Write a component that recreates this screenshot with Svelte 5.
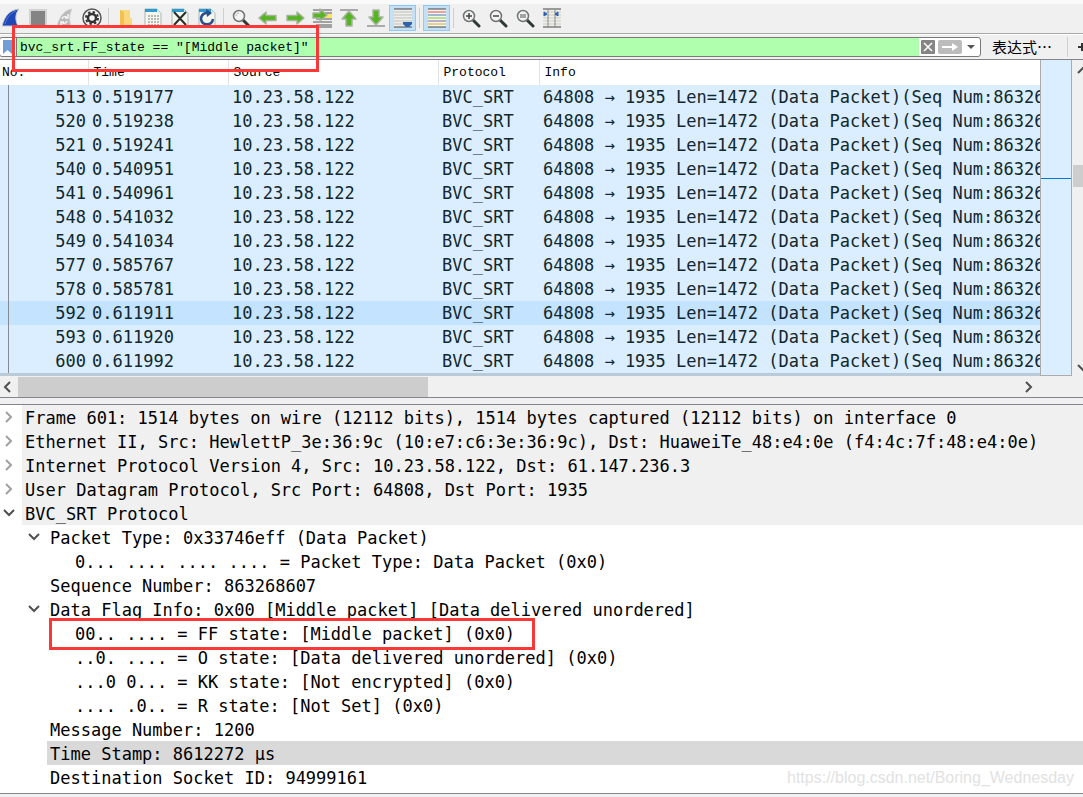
<script>
  const tools = [
    'fin', 'stop', 'restart', 'options', '|',
    'open', 'save', 'close', 'reload', '|',
    'find', 'back', 'forward', 'goto', 'first', 'last', 'autoscroll', '|',
    'colorize', '|',
    'zoom in', 'zoom out', 'zoom reset', 'columns'
  ]
  const ARROW = 'M1 10 L8 4 V7.5 H18 V12.5 H8 V16 Z'

  let filter = 'bvc_srt.FF_state == "[Middle packet]"'
  let selected = 592
  let pressed = { autoscroll: true, colorize: true }

  const info = '64808 → 1935 Len=1472 (Data Packet)(Seq Num:863268607)'
  const packets = [
    [513, '0.519177'], [520, '0.519238'], [521, '0.519241'], [540, '0.540951'],
    [541, '0.540961'], [548, '0.541032'], [549, '0.541034'], [577, '0.585767'],
    [578, '0.585781'], [592, '0.611911'], [593, '0.611920'], [600, '0.611992']
  ]

  // level, expander state ('' for leaves), text
  const tree = [
    [0, 'closed', 'Frame 601: 1514 bytes on wire (12112 bits), 1514 bytes captured (12112 bits) on interface 0'],
    [0, 'closed', 'Ethernet II, Src: HewlettP_3e:36:9c (10:e7:c6:3e:36:9c), Dst: HuaweiTe_48:e4:0e (f4:4c:7f:48:e4:0e)'],
    [0, 'closed', 'Internet Protocol Version 4, Src: 10.23.58.122, Dst: 61.147.236.3'],
    [0, 'closed', 'User Datagram Protocol, Src Port: 64808, Dst Port: 1935'],
    [0, 'open', 'BVC_SRT Protocol'],
    [1, 'open', 'Packet Type: 0x33746eff (Data Packet)'],
    [2, '', '0... .... .... .... = Packet Type: Data Packet (0x0)'],
    [1, '', 'Sequence Number: 863268607'],
    [1, 'open', 'Data Flag Info: 0x00 [Middle packet] [Data delivered unordered]'],
    [2, '', '00.. .... = FF state: [Middle packet] (0x0)'],
    [2, '', '..0. .... = O state: [Data delivered unordered] (0x0)'],
    [2, '', '...0 0... = KK state: [Not encrypted] (0x0)'],
    [2, '', '.... .0.. = R state: [Not Set] (0x0)'],
    [1, '', 'Message Number: 1200'],
    [1, '', 'Time Stamp: 8612272 µs'],
    [1, '', 'Destination Socket ID: 94999161']
  ]
  let field = 14
  const marked = 9
</script>

<main>
  <div class="toolbar">
    {#each tools as t}
      {#if t === '|'}
        <span class="sep"></span>
      {:else}
        <button class="tool" class:on={pressed[t]} aria-label={t}>
          <svg viewBox="0 0 20 20">
            {#if t === 'fin'}
              <path d="M1 18 C4 7 9 2 18 1 C14 6 14 12 17 18 Z" fill="#1f47b5" stroke="#c9ccd4" />
              <path d="M4 16 C6 9 10 5 15 3" fill="none" stroke="#4f78dc" />
            {:else if t === 'stop'}
              <rect x="1" y="1" width="18" height="18" fill="#d2d2d2" />
              <rect x="3" y="3" width="14" height="14" fill="#848484" />
            {:else if t === 'restart'}
              <path d="M2 18 C5 7 10 2 17 1 C14 7 14 12 16 18 Z" fill="#b9b9b9" stroke="#d2d2d2" />
              <path d="M7 11 C8 8 11 8 12 10 M13 6 V10 H10 M12 13 C11 16 8 16 7 14 M6 17 V14 H9" fill="none" stroke="#f5f5f5" stroke-width="1.5" />
            {:else if t === 'options'}
              <circle cx="10" cy="10" r="9" fill="#f5f5f5" stroke="#555" stroke-width="1.5" />
              <circle cx="10" cy="10" r="4" fill="none" stroke="#333" stroke-width="2.5" />
              <circle cx="10" cy="10" r="6" fill="none" stroke="#333" stroke-width="2" stroke-dasharray="2.4 2.3" />
            {:else if t === 'open'}
              <path d="M4 2 H14 V10 H16 V18 H4 Z" fill="#fbd87b" />
              <path d="M4 2 L8 4 V18 H4 Z" fill="#f3c14e" />
            {:else if t === 'save' || t === 'close' || t === 'reload'}
              <path d="M2 1 H14 L18 5 V19 H2 Z" fill="#f5f6ec" stroke="#a9b4b5" />
              <path d="M2 1 H14 L17 4 H2 Z" fill="#2e9ad0" />
              <path d="M14 1 V5 H18 Z" fill="#dcecf0" />
              {#if t === 'save'}
                <path d="M5 8 H16 M5 11 H16 M5 14 H16 M5 17 H16" stroke="#b4babc" stroke-width="2" stroke-dasharray="2 1" />
              {:else if t === 'close'}
                <path d="M4 4 L16 17 M16 4 L4 17" stroke="#2b2e30" stroke-width="2" />
              {:else}
                <path d="M13 6 C8 3 4 7 4 11 C5 18 15 18 16 11" fill="none" stroke="#28508f" stroke-width="2.5" />
                <path d="M9 1 L15 5 L10 9 Z" fill="#28508f" />
              {/if}
            {:else if t === 'find' || t.startsWith('zoom')}
              <path d="M12 12 L18 18" stroke="#2e3a38" stroke-width="3" stroke-linecap="round" />
              <circle cx="8" cy="8" r="5.5" fill="#f3f3f3" stroke="#707574" stroke-width="1.5" />
              {#if t === 'find'}
                <path d="M5 8 C5 6 6 5 8 5" fill="none" stroke="#bbb" />
              {:else if t === 'zoom in'}
                <path d="M5 8 H11 M8 5 V11" stroke="#444" stroke-width="1.5" />
              {:else if t === 'zoom out'}
                <path d="M5 8 H11" stroke="#444" stroke-width="1.5" />
              {:else}
                <path d="M5 7 H11 M5 9 H11" stroke="#555" stroke-width="1.2" />
              {/if}
            {:else if t === 'back'}
              <path class="arrow" d={ARROW} />
            {:else if t === 'forward'}
              <path class="arrow" d={ARROW} transform="rotate(180 10 10)" />
            {:else if t === 'goto'}
              <path d="M1 2 H20 M10 5 H20 M4 11 H20 M1 14 H20 M4 17 H20 M1 19 H20" stroke="#555" />
              <rect x="14" y="6" width="6" height="4" fill="#fbe55c" />
              <path class="arrow" d="M1 5 H8 V1 L15 7 L8 13 V10 H1 Z" />
            {:else if t === 'first' || t === 'last'}
              <path d={t === 'first' ? 'M1 2 H19' : 'M1 18 H19'} stroke="#aaa" stroke-width="2" />
              <path class="arrow" transform={t === 'last' ? 'rotate(180 10 10)' : null}
                    d="M10 3 L17 11 H13 V18 H7 V11 H3 Z" />
            {:else if t === 'autoscroll'}
              <rect x="1" y="1" width="18" height="18" fill="#eeeeea" />
              <path d="M1 1 H19 M1 19 H19" stroke="#444" />
              <path d="M1 4 H19 M1 7 H19 M1 10 H19 M1 13 H19 M1 16 H19" stroke="#bfc1bd" />
              <path d="M10 14 H19 V16 L16 19 H13 L10 16 Z" fill="#2d62ad" />
            {:else if t === 'colorize'}
              <rect x="1" y="1" width="18" height="18" fill="#f5f5ed" />
              <path d="M1 1 H19 M1 19 H19" stroke="#444" />
              <path d="M1 4 H19" stroke="#e34c4c" />
              <path d="M1 7 H19" stroke="#4a7db8" />
              <path d="M1 10 H19" stroke="#76cf38" />
              <path d="M1 13 H19" stroke="#80679a" />
              <path d="M1 16 H19" stroke="#d0ad32" />
            {:else}
              <rect x="1" y="1" width="18" height="18" fill="#f0f0e9" />
              <path d="M1 4 H19 M1 7 H19 M1 10 H19 M1 13 H19 M1 16 H19" stroke="#c8cac6" />
              <path d="M1 1 H19 M1 19 H19" stroke="#444" />
              <path d="M6 1 V19 M13 1 V19" stroke="#888" />
              <path d="M2 4 L5 6 L2 8 Z M16 4 L13 6 L16 8 Z" fill="#2861b2" stroke="#2861b2" />
            {/if}
          </svg>
        </button>
      {/if}
    {/each}
  </div>

  <div class="filterbar">
    <div class="field">
      <button class="bookmark" aria-label="bookmark">
        <svg viewBox="0 0 9 14"><path d="M0 0 H9 V14 L4.5 10 L0 14 Z" fill="#6f9fd6" /></svg>
      </button>
      <input type="text" aria-label="display filter" spellcheck="false" bind:value={filter} />
      <button class="clear" aria-label="clear" on:click={() => (filter = '')}>
        <svg viewBox="0 0 14 14">
          <rect width="14" height="14" rx="1" fill="#858585" />
          <path d="M3 3 L11 11 M11 3 L3 11" stroke="#fff" stroke-width="1.5" />
        </svg>
      </button>
      <button class="apply" aria-label="apply">
        <svg viewBox="0 0 24 14">
          <rect width="24" height="14" rx="2" fill="#bcbcbc" />
          <path d="M4 6 H14 V3 L20 7 L14 11 V8 H4 Z" fill="#fff" />
        </svg>
      </button>
      <button class="recent" aria-label="recent filters">
        <svg viewBox="0 0 8 4"><path d="M0 0 H8 L4 4 Z" fill="#555" /></svg>
      </button>
    </div>
    <button class="expr">表达式⋯</button>
    <span class="sep"></span>
    <button class="add" aria-label="add filter button">
      <svg viewBox="0 0 10 10"><path d="M5 1 V9 M1 5 H9" stroke="#333" stroke-width="2" /></svg>
    </button>
  </div>

  <section class="packets">
    <div class="list">
      <table>
        <colgroup>
          <col class="c-no" /><col class="c-time" /><col class="c-src" /><col class="c-proto" /><col />
        </colgroup>
        <thead>
          <tr><th>No.</th><th>Time</th><th>Source</th><th>Protocol</th><th>Info</th></tr>
        </thead>
        <tbody>
          {#each packets as [no, time]}
            <tr class:selected={no === selected} on:click={() => (selected = no)}>
              <td>{no}</td><td>{time}</td><td>10.23.58.122</td><td>BVC_SRT</td><td>{info}</td>
            </tr>
          {/each}
        </tbody>
      </table>
    </div>
    <div class="minimap"><span class="here"></span></div>
    <div class="vscroll">
      <svg viewBox="0 0 12 8"><path d="M1 7 L6 2 L11 7" /></svg>
      <span class="vthumb"></span>
      <svg viewBox="0 0 12 8"><path d="M1 1 L6 6 L11 1" /></svg>
    </div>
  </section>

  <div class="hscroll">
    <svg viewBox="0 0 8 12"><path d="M7 1 L2 6 L7 11" /></svg>
    <div class="track"><span class="hthumb"></span></div>
    <svg viewBox="0 0 8 12"><path d="M1 1 L6 6 L1 11" /></svg>
  </div>

  <ul class="tree">
    {#each tree as [level, state, text], i}
      <li class="l{level}" class:selected={i === field} class:marked={i === marked}>
        <span class="exp">
          {#if state === 'closed'}
            <svg class="closed" viewBox="0 0 12 12"><path d="M3 1 L8 6 L3 11" /></svg>
          {:else if state === 'open'}
            <svg viewBox="0 0 12 12"><path d="M1 3 L6 8 L11 3" /></svg>
          {/if}
        </span>
        <span class="text">{text}</span>
      </li>
    {/each}
  </ul>
  <div class="status"></div>

  <span class="filter-mark"></span>
  <span class="watermark">https://blog.csdn.net/Boring_Wednesday</span>
</main>

<style>
  :global(body) {
    background: #f0f0f0;
    overflow: hidden;
  }
  main {
    position: relative;
    overflow: hidden;
    color: #000;
    background: #f0f0f0;
    font-family: 'DejaVu Sans Mono', 'Noto Sans CJK SC', monospace;
    font-size: 17px;
    line-height: 24px;
  }
  button {
    padding: 0;
    border: 0;
    background: none;
    color: inherit;
    font: inherit;
  }
  svg {
    display: block;
  }

  .toolbar {
    display: flex;
    align-items: center;
    height: 28px;
    padding-bottom: 1px;
    margin-left: -3px;
    border-top: 4px solid #fafafa;
    border-bottom: 1px solid #a8a8a8;
  }
  .tool {
    box-sizing: border-box;
    display: grid;
    place-items: center;
    flex: none;
    width: 27px;
    height: 26px;
    border: 1px solid transparent;
  }
  .tool.on {
    background: #c4e0f5;
    border-color: #90c8f6;
  }
  .tool svg {
    width: 20px;
    height: 20px;
  }
  .arrow {
    fill: #55b520;
    stroke: #a6b49d;
    stroke-width: 1.5;
    stroke-linejoin: round;
  }
  .sep {
    flex: none;
    width: 1px;
    height: 20px;
    margin: 0 3px;
    background: #cfcfcf;
  }

  .filterbar {
    display: flex;
    align-items: center;
    height: 24px;
    border-top: 1px solid #fff;
    border-bottom: 1px solid #84848c;
    overflow: hidden;
  }
  .field {
    box-sizing: border-box;
    flex: 1;
    display: flex;
    align-items: center;
    height: 20px;
    margin-left: -1px;
    padding-right: 3px;
    border: 1px solid #7a7a7a;
    border-radius: 3px;
    background: #fff;
  }
  .bookmark {
    flex: none;
    width: 16px;
    padding-left: 3px;
  }
  .bookmark svg {
    width: 9px;
    height: 14px;
  }
  input {
    box-sizing: border-box;
    flex: 1;
    min-width: 0;
    height: 18px;
    padding: 0 3px;
    border: 0;
    border-left: 1px solid #7a7a7a;
    outline: 0;
    background: #afffaf;
    color: #000;
    font: 13px 'Liberation Mono', monospace;
  }
  .clear svg {
    width: 14px;
    height: 14px;
    margin-left: 2px;
  }
  .apply svg {
    width: 24px;
    height: 14px;
    margin: 0 3px;
  }
  .recent {
    width: 12px;
  }
  .recent svg {
    width: 8px;
    height: 4px;
    margin: auto;
  }
  .expr {
    margin: 0 12px 0 11px;
    font-family: 'Noto Sans CJK SC', sans-serif;
    font-size: 15px;
    line-height: 20px;
    white-space: nowrap;
  }
  .add {
    flex: none;
    width: 6px;
    margin-left: 6px;
    overflow: hidden;
  }
  .add svg {
    width: 10px;
    height: 10px;
  }

  .packets {
    display: flex;
    overflow: hidden;
  }
  .list {
    flex: 1;
    min-width: 0;
    overflow: hidden;
    background: #fff;
    border-bottom: 3px solid #b9cbd8;
  }
  table {
    width: 100%;
    table-layout: fixed;
    border-collapse: collapse;
  }
  .c-no { width: 88px; }
  .c-time { width: 140px; }
  .c-src { width: 210px; }
  .c-proto { width: 101px; }
  th {
    height: 25px;
    padding: 0 0 0 5px;
    border-left: 1px solid #e2e2e2;
    font-family: 'Liberation Mono', monospace;
    font-size: 13px;
    font-weight: 400;
    text-align: left;
  }
  th:first-child {
    padding-left: 2px;
    border-left: 0;
  }
  tbody tr {
    background: #daeeff;
    color: #12272e;
  }
  tbody tr.selected {
    background: #c3e3ff;
  }
  td {
    height: 24px;
    padding: 0 0 0 4px;
    overflow: hidden;
    white-space: nowrap;
  }
  td:first-child {
    padding-right: 2px;
    background: linear-gradient(#858b90, #858b90) 8px 0 / 1px 100% no-repeat;
    text-align: right;
  }
  .minimap {
    position: relative;
    width: 30px;
    border: 1px solid #ababab;
    border-top: 0;
    background: #daeeff;
  }
  .here {
    position: absolute;
    top: 118px;
    left: 0;
    width: 100%;
    height: 1px;
    background: #0078d7;
  }
  .vscroll {
    display: flex;
    flex-direction: column;
    align-items: center;
    width: 20px;
    margin: 0 -10px 0 1px;
    padding: 6px 0 4px;
  }
  .vscroll svg {
    width: 12px;
    height: 8px;
  }
  .vthumb {
    width: 100%;
    height: 22px;
    margin: 91px 0 auto;
    background: #cdcdcd;
  }
  .vscroll path,
  .hscroll path,
  .exp path {
    fill: none;
    stroke: #505050;
    stroke-width: 2;
  }

  .hscroll {
    display: flex;
    align-items: center;
    height: 21px;
    padding: 0 50px 0 3px;
    border-bottom: 1px solid #84848c;
  }
  .hscroll svg {
    flex: none;
    width: 8px;
    height: 12px;
  }
  .track {
    flex: 1;
    height: 20px;
    margin: 0 7px;
  }
  .hthumb {
    display: block;
    width: 41%;
    height: 100%;
    background: #cdcdcd;
  }

  .tree {
    margin: 6px 0 0;
    padding: 0 0 4px;
    border-top: 1px solid #84848c;
    border-bottom: 1px solid #84848c;
    background: #fff;
    list-style: none;
    line-height: 26px;
  }
  li {
    position: relative;
    display: flex;
    height: 24px;
  }
  .l1 { padding-left: 25px; }
  .l2 { padding-left: 50px; }
  .exp {
    box-sizing: border-box;
    display: flex;
    align-items: center;
    flex: none;
    width: 22px;
    padding-left: 3px;
  }
  .exp svg {
    width: 12px;
    height: 12px;
  }
  .exp .closed path {
    stroke: #a0a0a0;
  }
  .text {
    flex: 1;
    padding-left: 3px;
    white-space: pre;
  }
  .l0 .text {
    background: #f0f0f0;
  }
  .selected .text {
    background: #d9d9d9;
  }
  .marked::after {
    content: '';
    position: absolute;
    box-sizing: border-box;
    top: -3px;
    left: 49px;
    width: 486px;
    height: 32px;
    border: 3px solid #fb3838;
  }
  .status {
    height: 3px;
  }

  .filter-mark {
    position: absolute;
    box-sizing: border-box;
    top: 25px;
    left: 12px;
    width: 307px;
    height: 47px;
    border: 3px solid #fb3838;
  }
  .watermark {
    position: absolute;
    right: 9px;
    bottom: 7px;
    color: #e2e2e2;
    font-family: 'Liberation Sans', sans-serif;
    font-size: 16px;
  }
</style>
